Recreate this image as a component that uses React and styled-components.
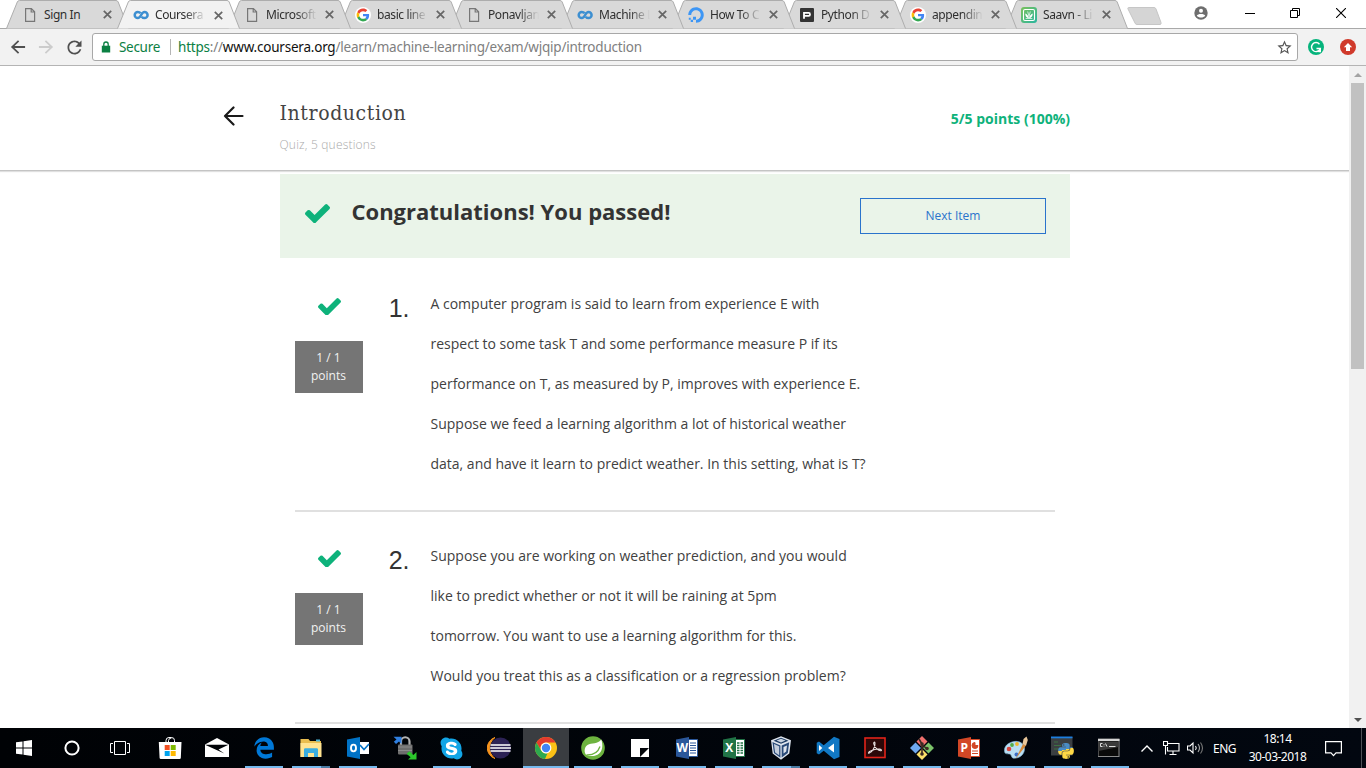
import React from "react";
import styled, { createGlobalStyle, css } from "styled-components";
import { FaEdgeLegacy, FaSkype, FaPython, FaDigitalOcean } from "react-icons/fa";

const GlobalStyle = createGlobalStyle`
  *, *::before, *::after { box-sizing: border-box; }
  body { margin: 0; background: #fff; overflow: hidden; font-family: "Open Sans", sans-serif; }
  svg { display: block; flex: none; }
`;

const uiFont = css`font-family: "Noto Sans", "Open Sans", sans-serif;`;

const Desktop = styled.div`
  width: 1366px;
  height: 768px;
  display: flex;
  flex-direction: column;
  overflow: hidden;
`;

/* ---------- tab strip ---------- */

const TabStrip = styled.div`
  height: 28px;
  display: flex;
  padding-left: 6px;
  background: #fff;
`;

const TabShell = styled.div`
  position: relative;
  z-index: ${(p) => p.$z};
  width: 123px;
  height: ${(p) => (p.$active ? 29 : 28)}px;
  margin-right: -12px;
  padding: 1px 0 0 16px;
  flex: none;
  display: flex;
  align-items: center;
`;

const TabShape = styled.svg`
  position: absolute;
  inset: 0;
  z-index: -1;
`;

const Favicon = styled.span`
  width: 16px;
  height: 16px;
  margin-right: 6px;
  flex: none;
  display: flex;
  align-items: center;
  justify-content: center;
`;

const TabTitle = styled.span`
  ${uiFont}
  width: 54px;
  margin-right: 5px;
  flex: none;
  white-space: nowrap;
  font-size: 12px;
  line-height: 16px;
  letter-spacing: -0.4px;
  color: #2f2f2f;
  ${(p) => p.$fade && css`mask-image: linear-gradient(90deg, #000 30px, transparent 51px);`}
`;

const NewTab = styled.svg`
  margin: 7px 0 0 11px;
`;

const WindowControls = styled.div`
  margin-left: auto;
  height: 26px;
  display: flex;
  align-items: center;
`;

const ControlCell = styled.span`
  width: ${(p) => p.$w}px;
  display: flex;
  justify-content: center;
`;

/* ---------- toolbar ---------- */

const Toolbar = styled.div`
  height: 38px;
  display: flex;
  align-items: center;
  padding-left: 8px;
  background: #f2f2f2;
  border-top: 1px solid #a9a9a9;
  border-bottom: 1px solid #b4b4b4;
`;

const NavButton = styled.span`
  width: 28px;
  display: flex;
`;

const AddressBar = styled.div`
  ${uiFont}
  width: 1206px;
  height: 28px;
  margin-right: 10px;
  padding: 0 4px 0 8px;
  display: flex;
  align-items: center;
  background: #fff;
  border: 1px solid #a8a8a8;
  border-radius: 3px;
  font-size: 13.5px;
  line-height: 20px;
  white-space: nowrap;
`;

const Secure = styled.span`
  width: 51px;
  margin-left: 8px;
  letter-spacing: -0.3px;
  color: #0b8043;
`;

const Separator = styled.span`
  width: 1px;
  height: 16px;
  margin-right: 7px;
  background: #b5b5b5;
`;

const Url = styled.span`
  flex: 1;
  color: #808080;
  letter-spacing: -0.21px;
`;

const Scheme = styled.span`color: #0b8043;`;
const Host = styled.span`color: #111;`;

const Extension = styled.span`
  width: 32px;
  display: flex;
`;

/* ---------- page ---------- */

const Viewport = styled.div`
  height: 662px;
  display: flex;
  background: #fff;
`;

const Page = styled.main`
  width: 1349px;
  height: 662px;
  overflow: hidden;
`;

const Header = styled.header`
  height: 105px;
  padding: 0 279px 0 223px;
  display: flex;
  border-bottom: 1px solid #c4c4c4;
  box-shadow: 0 1px 1px rgba(0, 0, 0, 0.12);
`;

const BackLink = styled.span`
  width: 56.5px;
  padding-top: 40px;
`;

const Heading = styled.div`
  flex: 1;
  padding-top: 32px;
`;

const Title = styled.h1`
  margin: 0;
  font: 400 21px/30px "DejaVu Serif Condensed", "DejaVu Serif", serif;
  font-stretch: condensed;
  letter-spacing: 0.6px;
  color: #444;
`;

const Subtitle = styled.div`
  margin-top: 8px;
  font-size: 12px;
  line-height: 18px;
  font-weight: 300;
  letter-spacing: 0.2px;
  color: #aaa;
`;

const Score = styled.div`
  padding-top: 43px;
  font-size: 14px;
  line-height: 20px;
  font-weight: 700;
  color: #0eb27b;
  white-space: nowrap;
`;

const Content = styled.div`
  width: 790px;
  margin: 3px 0 0 280px;
`;

const Banner = styled.section`
  height: 84px;
  margin-bottom: 2px;
  padding: 24px 24px 0 25px;
  display: flex;
  align-items: flex-start;
  background: #eaf4e9;
`;

const BannerMark = styled.span`
  padding-top: 6px;
`;

const BannerText = styled.h2`
  flex: 1;
  margin: -3px 0 0 21.5px;
  font-size: 22px;
  line-height: 32px;
  font-weight: 700;
  color: #333;
`;

const NextButton = styled.button`
  width: 186px;
  height: 36px;
  padding: 0 0 2px;
  border: 1px solid #2a73cc;
  background: transparent;
  font-family: "Open Sans", sans-serif;
  font-size: 12px;
  color: #2a73cc;
`;

const Question = styled.section`
  margin: 0 15px;
  padding: 24px 0 26px;
  display: flex;
  border-bottom: 2px solid #e0e0e0;
`;

const Status = styled.div`
  width: 68px;
  padding-top: 13.5px;
  display: flex;
  flex-direction: column;
  align-items: center;
  gap: 25.5px;
`;

const Points = styled.div`
  width: 68px;
  height: 52px;
  padding: 8px 1px 0 0;
  background: #757575;
  color: #f2f2f2;
  font-size: 12px;
  line-height: 18px;
  text-align: center;
`;

const Number = styled.div`
  width: 46.5px;
  margin-right: 21px;
  padding-top: 9px;
  text-align: right;
  font: 400 25px/30px "Liberation Sans", Arial, sans-serif;
  color: #333;
`;

const Prompt = styled.p`
  margin: 0;
  font-size: 14px;
  line-height: 40px;
  color: #414141;
  white-space: nowrap;
`;

const Scrollbar = styled.div`
  width: 17px;
  padding: 7px 0 6px;
  display: flex;
  flex-direction: column;
  align-items: center;
  background: #f1f1f1;
`;

const Thumb = styled.div`
  width: 13px;
  height: 286px;
  margin: 6px 0 auto;
  background: #c1c1c1;
`;

/* ---------- taskbar ---------- */

const Taskbar = styled.footer`
  ${uiFont}
  height: 40px;
  display: flex;
  background: linear-gradient(90deg, #000205, #020710);
  color: #fff;
`;

const SystemCell = styled.span`
  width: 48px;
  flex: none;
  display: flex;
  align-items: center;
  justify-content: center;
`;

const Apps = styled.div`
  margin-left: 3px;
  flex: none;
  display: flex;
`;

const AppCell = styled.span`
  width: 47px;
  height: 40px;
  padding-right: 1px;
  display: flex;
  flex-direction: column;
  align-items: center;
  background: ${(p) => (p.$focused ? "linear-gradient(90deg, #3a3d41 46px, transparent 46px)" : "none")};
`;

const AppIcon = styled.span`
  height: 38px;
  margin-right: 1px;
  padding-top: 2px;
  display: flex;
  align-items: center;
`;

const Indicator = styled.span`
  width: ${(p) => (p.$focused ? 46 : 38)}px;
  height: 2px;
  background: ${(p) => (p.$stacked ? "linear-gradient(90deg, #76b9ed 29px, #4a7ba3 29px)" : p.$running ? "#76b9ed" : "transparent")};
`;

const SkypeBadge = styled.span`
  display: flex;
  border-radius: 50%;
  background: radial-gradient(circle, #fff 8px, transparent 8.5px);
`;

const Tray = styled.div`
  margin-left: 7px;
  flex: none;
  display: flex;
  align-items: center;
  font-size: 12px;
`;

const Language = styled.span`
  width: 34px;
  margin-left: 12px;
  letter-spacing: -0.5px;
`;

const Clock = styled.div`
  width: 61px;
  display: flex;
  flex-direction: column;
  align-items: center;
  line-height: 18px;
  letter-spacing: -0.5px;
  white-space: nowrap;
`;

const TrayIcon = styled.span`
  width: ${(p) => p.$w}px;
  display: flex;
  justify-content: center;
`;

const ShowDesktop = styled.span`
  width: 5px;
  margin-left: auto;
  border-left: 1px solid #4d5157;
`;

/* ---------- drawings ---------- */

const FileIcon = () => (
  <svg width="16" height="16" viewBox="0 0 16 16" fill="none" stroke="#777" strokeWidth="1.2">
    <path d="M3.6 1.6h5.8l3.2 3.2v9.6h-9zM9.2 1.8v3.2h3.2" />
  </svg>
);

const CourseraIcon = () => (
  <svg width="16" height="16" viewBox="0 0 16 16" fill="none" stroke="#3d8fd1" strokeWidth="2.500">
    <path d="M7.600 6.100C6.800 5.200 5.900 4.900 4.800 4.900a3.100 3.100 0 0 0 0 6.200C8.300 11.100 8 4.900 11.500 4.900a3.100 3.100 0 0 1 0 6.200C10.100 11.100 9.300 10.400 8.800 9.700" />
  </svg>
);

const GoogleIcon = () => (
  <svg width="16" height="16" viewBox="0 0 16 16">
    <circle cx="8" cy="8" r="8" fill="#fff" />
    <g transform="translate(1.600 1.600) scale(.2667)">
      <path fill="#EA4335" d="M24 9.500c3.540 0 6.710 1.220 9.210 3.600l6.850-6.850C35.900 2.380 30.470 0 24 0 14.620 0 6.510 5.380 2.560 13.220l7.980 6.190C12.430 13.720 17.740 9.500 24 9.500z" />
      <path fill="#4285F4" d="M46.980 24.550c0-1.570-.15-3.090-.38-4.550H24v9.020h12.940c-.58 2.960-2.260 5.480-4.780 7.180l7.730 6c4.510-4.180 7.090-10.360 7.090-17.650z" />
      <path fill="#FBBC05" d="M10.530 28.590c-.48-1.450-.76-2.990-.76-4.590s.27-3.140.76-4.590l-7.980-6.190C.92 16.460 0 20.120 0 24c0 3.880.92 7.540 2.560 10.780l7.970-6.190z" />
      <path fill="#34A853" d="M24 48c6.480 0 11.930-2.130 15.890-5.810l-7.730-6c-2.150 1.450-4.920 2.300-8.160 2.300-6.260 0-11.570-4.220-13.470-9.910l-7.980 6.190C6.510 42.620 14.620 48 24 48z" />
    </g>
  </svg>
);

const ProgIcon = () => (
  <svg width="14" height="14" viewBox="0 0 14 14">
    <rect width="14" height="14" rx="1" fill="#343434" />
    <path d="M4 10.800V4.900h4.800q1.200 0 1.200 1.500t-1.200 1.500H4.500" fill="none" stroke="#fff" strokeWidth="1.800" />
  </svg>
);

const SaavnIcon = () => (
  <svg width="16" height="16" viewBox="0 0 16 16">
    <defs>
      <linearGradient id="saavn" x1="0" y1="0" x2="1" y2="1">
        <stop stopColor="#7ac15a" /><stop offset="1" stopColor="#2ab5a0" />
      </linearGradient>
    </defs>
    <rect width="16" height="16" rx="3" fill="url(#saavn)" />
    <rect x="2.500" y="2.500" width="11" height="11" rx="1.500" fill="none" stroke="#fff" strokeWidth="1.100" />
    <path d="M8 11.200C5.500 11.200 4.300 9 4.200 6.500 6.500 7.500 7.500 9 8 11.200c.5-2.200 1.500-3.700 3.800-4.700C11.700 9 10.500 11.200 8 11.200z" fill="#fff" />
    <path d="M8 9.500 6.700 4.500M8 9.500 9.300 4.500M4.700 11.500h6.600" stroke="#fff" strokeWidth=".7" />
  </svg>
);

const CloseX = () => (
  <svg width="9" height="9" viewBox="0 0 9 9" stroke="#666" strokeWidth="1.700">
    <path d="M.8.8l7.400 7.400M8.200.8.800 8.200" />
  </svg>
);

const Material = ({ size, color, d }) => (
  <svg width={size} height={size} viewBox="0 0 24 24" fill={color}><path d={d} /></svg>
);

const BACK = "M20.500 10.900H7.830l5.590-5.490L12 4l-8.500 8 8.500 8 1.410-1.410L7.830 13.100H20.500v-2.200z";
const FORWARD = "M12 4l-1.410 1.410L16.170 10.900H3.500v2.200h12.670l-5.580 5.490L12 20l8.500-8z";
const RELOAD = "M17.650 6.350C16.200 4.900 14.210 4 12 4c-4.420 0-7.990 3.580-7.990 8s3.570 8 7.990 8c3.730 0 6.840-2.550 7.730-6h-2.080c-.82 2.330-3.040 4-5.650 4-3.310 0-6-2.690-6-6s2.690-6 6-6c1.660 0 3.140.69 4.220 1.780L13 11h7V4l-2.350 2.350z";
const STAR = "M22 9.240l-7.190-.62L12 2 9.190 8.630 2 9.240l5.460 4.730L5.820 21 12 17.270 18.180 21l-1.630-7.030L22 9.240zM12 15.400l-3.760 2.270 1-4.280-3.320-2.880 4.380-.38L12 6.100l1.710 4.040 4.380.38-3.320 2.880 1 4.280L12 15.400z";

const Check = ({ width }) => (
  <svg width={width} height={width * 0.77} viewBox="121 334 1550 1188" fill="#0eb27b">
    <path d="M1671 566q0 40-28 68l-724 724-136 136q-28 28-68 28t-68-28l-136-136-362-362q-28-28-28-68t28-68l136-136q28-28 68-28t68 28l294 295 656-657q28-28 68-28t68 28l136 136q28 28 28 68z" />
  </svg>
);

const Icon = ({ children }) => (
  <svg width="24" height="24" viewBox="0 0 24 24">{children}</svg>
);

const Office = ({ dark, mid, letter, children }) => (
  <Icon>
    <path d="M13 3.500h9.500v17H13z" fill="#fff" stroke={mid} strokeWidth="1" />
    {children}
    <path d="M1 3.500 14 1v22L1 20.500z" fill={dark} />
    <text x="7.300" y="16.300" textAnchor="middle" fontFamily="Open Sans, sans-serif" fontWeight="700" fontSize="12" fill="#fff">{letter}</text>
  </Icon>
);

const Store = () => (
  <Icon>
    <path d="M8 7V4.500a3 3 0 0 1 3-3h2.500a3 3 0 0 1 3 3V7M10.500 7V4.500a3 3 0 0 1 3-2.500" fill="none" stroke="#fff" strokeWidth="1" />
    <path d="M.8 6h22.700L22.800 22a1.200 1.200 0 0 1-1.200 1H2.800a1.200 1.200 0 0 1-1.200-1z" fill="#fff" />
    <path d="M6.700 9h5v5h-5z" fill="#f25022" /><path d="M12.700 9h5v5h-5z" fill="#7fba00" />
    <path d="M6.700 15h5v5h-5z" fill="#00a4ef" /><path d="M12.700 15h5v5h-5z" fill="#ffb900" />
  </Icon>
);

const Mail = () => (
  <Icon>
    <path d="M0 8.500 12 2l12 6.500V21H0z" fill="#fff" />
    <path d="M0 8.700h23.500L13.500 13.600l5.800 3.800z" fill="#000307" />
  </Icon>
);

const Explorer = () => (
  <Icon>
    <path d="M1.500 3h8l1.500 2h11v16H1.500z" fill="#e9bd4f" />
    <path d="M1.500 7h21v14h-21z" fill="#ffe391" />
    <path d="M17 3.500h4v2h-4z" fill="#4cb6d9" />
    <path d="M5 21v-7.500a1.300 1.300 0 0 1 1.300-1.300h11.400A1.300 1.300 0 0 1 19 13.500V21h-4v-4H9v4z" fill="#3aade0" />
  </Icon>
);

const Outlook = () => (
  <Icon>
    <path d="M12 6h11v12H12z" fill="#fff" />
    <path d="m14 9 4 4.500L23 8" fill="none" stroke="#0072c6" strokeWidth="1.600" />
    <path d="M1 3.500 14 1v22L1 20.500z" fill="#0072c6" />
    <ellipse cx="7.500" cy="12" rx="2.500" ry="3.400" fill="none" stroke="#fff" strokeWidth="1.900" />
  </Icon>
);

const WinScp = () => (
  <Icon>
    <path d="M8 11V5.500a4 4 0 0 1 8.500 0V11" fill="none" stroke="#b4b4b4" strokeWidth="2.200" />
    <rect x="5" y="8.500" width="14.500" height="10" rx="1" fill="#6e6e6e" />
    <path d="M5 11h14M5 14.500h14" stroke="#8c8c8c" />
    <path d="M.5.800H8.500V8L6 5.500 3 8 .8 5.800 3.500 3.500z" fill="#2f7fe0" />
    <path d="M23.500 23.500H15l2.600-2.200-4-3.500 2.800-2.500 4 3.600 3.100-2.900z" fill="#2cc72c" />
  </Icon>
);

const Eclipse = () => (
  <Icon>
    <path d="M8 1.500A11 11 0 0 0 8 22.500 13 13 0 0 1 8 1.500z" fill="#f7941e" stroke="#f7941e" />
    <circle cx="13.500" cy="12" r="10.500" fill="#2c2255" />
    <path d="M3.500 9h20M3.200 12h20.800M3.500 15h20" stroke="#fff" strokeWidth="1.500" />
  </Icon>
);

const Chrome = () => (
  <Icon>
    <circle cx="12" cy="12" r="11" fill="#fbc116" />
    <path d="M2.470 6.500A11 11 0 0 1 21.530 6.500H12a5.500 5.500 0 0 0-4.760 8.250z" fill="#e33b2e" />
    <path d="M2.470 6.500 7.240 14.750A5.500 5.500 0 0 0 13.500 17.300L11 22.960A11 11 0 0 1 2.470 6.500z" fill="#2da94f" />
    <circle cx="12" cy="12" r="5.400" fill="#fff" /><circle cx="12" cy="12" r="4.200" fill="#4285f4" />
  </Icon>
);

const Spring = () => (
  <Icon>
    <circle cx="12" cy="12" r="11.800" fill="#6db33f" />
    <path d="M20.300 3.500c1.900 6 1.500 12.500-3.800 15.300-4 2-8 1.200-11 .3C3 17 2.800 11.500 6.500 9c4-2.500 10.500-.5 13.800-5.500z" fill="#fff" />
    <path d="M5.500 18.800c6 .3 11.500-2.300 13.500-8.300" fill="none" stroke="#6db33f" strokeWidth="1.300" />
  </Icon>
);

const StickyNotes = () => (
  <Icon>
    <path d="M3 3h18v18H3z" fill="#fff" />
    <path d="M12 12h9l-9 9z" fill="#05080c" />
  </Icon>
);

const VBox = () => (
  <Icon>
    <path d="M12 .3 22 4.200 20.300 17.500 12 23.700 3.700 17.500 2 4.200z" fill="#dfe5ee" />
    <path d="M12 1.800 19.500 4.700 12 7.800 4.500 4.700z" fill="#1d3b63" />
    <path d="m12 2.800 4.500 1.800L12 6.400 7.500 4.600z" fill="#c9d3e0" />
    <path d="M3.800 6.300 11.300 9.500v12L5.200 17z" fill="#c3cddb" /><path d="M20.200 6.300 12.700 9.500v12L18.800 17z" fill="#2a4a78" />
    <path d="M4.200 7 10.800 10v10.500L5.500 16.700z" fill="none" stroke="#2a4a78" strokeWidth="1.200" />
    <path d="M14.500 17.500V11l3.500-1.500-.8 6z" fill="#dfe5ee" />
  </Icon>
);

const VsCode = () => (
  <Icon>
    <path d="M18 .700 23.500 3v18L18 23.300 7.700 14.800 3 18.500.7 17.200V6.800L3 5.500l4.700 3.700z" fill="#1178c4" />
    <path d="M18 7.500 12 12l6 4.500zM3 9v6l3.300-3z" fill="#fff" />
  </Icon>
);

const Acrobat = () => (
  <Icon>
    <rect x="2" y="2" width="20" height="19.500" fill="#2b0808" stroke="#e2231a" strokeWidth="1.600" />
    <path d="M6 17.300c3-1 6.500-6.500 6-10.300-.2-1.400-1.600-1-1.300.5.6 3.500 4 7 6.800 7.300 1.500 0 1.300-1.500-.7-1.700-3-.3-6 .4-9.300 2-2.200 1-2.500 2.400-1.500 2.200z" fill="none" stroke="#e8e0e0" strokeWidth="1.100" />
  </Icon>
);

const Git = () => (
  <Icon>
    <path d="m12 0 5.500 5.500L12 11 6.500 5.500z" fill="#f0706e" />
    <path d="m5.500 6.500 5.500 5.500-5.500 5.500L0 12z" fill="#6ea8f0" />
    <path d="m18.500 6.500 5.500 5.500-5.500 5.500L13 12z" fill="#7cc46a" />
    <path d="m12 13 5.500 5.500L12 24l-5.500-5.500z" fill="#fbe06a" />
    <path d="M9 3l3 5v9.500M12 8.500l4.500 4" fill="none" stroke="#3c2a23" strokeWidth="1.600" />
    <circle cx="12" cy="18" r="1.800" fill="#3c2a23" /><circle cx="17" cy="12.500" r="1.800" fill="#3c2a23" /><circle cx="12" cy="8" r="1.800" fill="#3c2a23" />
  </Icon>
);

const Paint = () => (
  <Icon>
    <path d="M10 5.500C16 4.500 21 8.500 20.500 13.500c-.5 6-6 9-11 8.700C7 22 8 18.500 5.500 18c-2-.4-4.500.5-5-2.500C-.3 10.500 4 6.500 10 5.500z" fill="#b9def3" stroke="#7fb4d4" strokeWidth=".6" />
    <circle cx="5" cy="13" r="2.300" fill="#d8453e" /><circle cx="8" cy="9" r="1.900" fill="#52ad48" /><circle cx="13" cy="8" r="1.900" fill="#f0b52d" />
    <circle cx="12.500" cy="18.500" r="2" fill="#3b6fc8" />
    <path d="m11.500 23 7.500-15 3 1.500z" fill="#d88b3a" /><path d="M18.500 8 19.500 3l3-2.500 1.300 3.500L22 9.700z" fill="#e8c69a" />
  </Icon>
);

const PythonApp = () => (
  <Icon>
    <path d="M0 1h21.500v18.500H0z" fill="#3b3f42" /><path d="M0 .500h21.500v1.800H0z" fill="#1d7fe0" />
    <path d="M3 6h4M3 9.500h7M3 13h5" stroke="#3c7043" strokeWidth="1.200" />
    <defs>
      <linearGradient id="py" x1="0" y1="0" x2=".25" y2="1">
        <stop offset=".5" stopColor="#4a8cc4" /><stop offset=".5" stopColor="#ffd845" />
      </linearGradient>
    </defs>
    <FaPython x="6" y="6" size="18" fill="url(#py)" />
  </Icon>
);

const Terminal = () => (
  <svg width="24" height="24" viewBox="1.500 0 24 24">
    <rect x="1.500" y="3" width="21" height="17.500" fill="#0a0a0a" stroke="#8d8d8d" />
    <path d="M1 3h22v2H1z" fill="#d5d5d5" />
    <path d="M2 5.500h20V11L2 15z" fill="#3a3a3a" />
    <path d="M6 7.500H4v3h2M7.500 8v.7M7.500 9.700v.8M9 7.500l1.500 3.200M12.500 10.500H19" fill="none" stroke="#eee" strokeWidth=".9" />
  </svg>
);

const ICONS = {
  file: <FileIcon />, coursera: <CourseraIcon />, google: <GoogleIcon />, prog: <ProgIcon />, saavn: <SaavnIcon />,
  ocean: <FaDigitalOcean size={16} color="#3d96f5" />,
};

const TABS = [
  ["file", "Sign In"], ["coursera", "Coursera"], ["file", "Microsoft"], ["google", "basic line"], ["file", "Ponavljan"],
  ["coursera", "Machine L"], ["ocean", "How To C"], ["prog", "Python D"], ["google", "appendin"], ["saavn", "Saavn - Li"],
];

const Tab = ({ icon, title, active, z }) => (
  <TabShell $active={active} $z={z}>
    <TabShape width="123" height="29" viewBox="0 0 123 29">
      <path d="M.5 28.500 11.300 2Q12 .500 13.500.500H110Q111.500.500 112.200 2L122.500 28.500" fill={active ? "#f2f2f2" : "#d9d9d9"} stroke="#adadad" />
    </TabShape>
    <Favicon>{ICONS[icon]}</Favicon>
    <TabTitle $fade={title.length > 7}>{title}</TabTitle>
    <CloseX />
  </TabShell>
);

const APPS = [
  [<Store />, ""], [<Mail />, ""], [<FaEdgeLegacy size={22} color="#0078d7" />, "running"], [<Explorer />, "stacked"], [<Outlook />, "running"],
  [<WinScp />, ""], [<SkypeBadge><FaSkype size={25} color="#12a5e6" /></SkypeBadge>, "running"], [<Eclipse />, ""], [<Chrome />, "focused"], [<Spring />, "running"],
  [<StickyNotes />, "running"],
  [<Office dark="#2b579a" mid="#2b579a" letter="W"><path d="M15 7h6M15 9.500h6M15 12h6M15 14.500h6M15 17h6" stroke="#2b579a" /></Office>, "running"],
  [<Office dark="#217346" mid="#217346" letter="X"><path d="M15 7h6M15 9.500h6M15 12h6M15 14.500h6M15 17h6" stroke="#217346" strokeWidth="1.300" strokeDasharray="2.500 1" /></Office>, "running"],
  [<VBox />, "stacked"], [<VsCode />, "running"], [<Acrobat />, "running"], [<Git />, "running"],
  [<Office dark="#d24726" mid="#d24726" letter="P"><path d="M18 6.500a3 3 0 1 0 3 3h-3zM15 15h6M15 17.500h6" fill="#d24726" stroke="#d24726" /></Office>, "running"],
  [<Paint />, "running"], [<PythonApp />, "running"], [<Terminal />, "running"],
];

const QUESTIONS = [
  [
    "A computer program is said to learn from experience E with",
    "respect to some task T and some performance measure P if its",
    "performance on T, as measured by P, improves with experience E.",
    "Suppose we feed a learning algorithm a lot of historical weather",
    "data, and have it learn to predict weather. In this setting, what is T?",
  ],
  [
    "Suppose you are working on weather prediction, and you would",
    "like to predict whether or not it will be raining at 5pm",
    "tomorrow. You want to use a learning algorithm for this.",
    "Would you treat this as a classification or a regression problem?",
  ],
];

export default function App() {
  return (
    <Desktop>
      <GlobalStyle />
      <TabStrip>
        {TABS.map(([icon, title], i) => (
          <Tab key={title} icon={icon} title={title} active={i === 1} z={i === 1 ? 20 : 12 - i} />
        ))}
        <NewTab width="35" height="18" viewBox="0 0 35 18">
          <path d="M1.500.500H27Q28.500.500 29 2L34 15.500Q34.500 17.500 33 17.500H10Q8.500 17.500 8 16L1 2Q.5.500 1.500.500z" fill="#d5d5d5" stroke="#c6c6c6" />
        </NewTab>
        <WindowControls>
          <ControlCell $w={50}>
            <svg width="14" height="14" viewBox="0 0 14 14">
              <circle cx="7" cy="7" r="6.700" fill="#6e6e6e" /><circle cx="7" cy="4.700" r="2" fill="#fff" />
              <path d="M2.800 9.800C3.500 7.500 10.500 7.500 11.200 9.800 9.500 12.200 4.500 12.200 2.800 9.800z" fill="#fff" />
            </svg>
          </ControlCell>
          <ControlCell $w={48}><svg width="10" height="10"><path d="M0 5.500h10" stroke="#000" /></svg></ControlCell>
          <ControlCell $w={42}>
            <svg width="10" height="10" fill="none" stroke="#000"><path d="M.5 2.500h7v7h-7zM2.500 2.500v-2h7v7h-2" /></svg>
          </ControlCell>
          <ControlCell $w={50}><svg width="10" height="10" stroke="#000" strokeWidth="1.100"><path d="M0 0l10 10M10 0 0 10" /></svg></ControlCell>
        </WindowControls>
      </TabStrip>

      <Toolbar>
        <NavButton><Material size={20} color="#505050" d={BACK} /></NavButton>
        <NavButton><Material size={20} color="#ccc" d={FORWARD} /></NavButton>
        <NavButton><Material size={21} color="#505050" d={RELOAD} /></NavButton>
        <AddressBar>
          <svg width="10" height="12" viewBox="0 0 10 12">
            <path d="M2.800 5V3.200a2.200 2.200 0 0 1 4.400 0V5" fill="none" stroke="#0b8043" strokeWidth="1.300" />
            <path d="M.8 4.700h8.400v6.800H.8z" fill="#0b8043" />
          </svg>
          <Secure>Secure</Secure>
          <Separator />
          <Url><Scheme>https</Scheme>://<Host>www.coursera.org</Host>/learn/machine-learning/exam/wjqip/introduction</Url>
          <Material size={17} color="#555" d={STAR} />
        </AddressBar>
        <Extension>
          <svg width="16" height="16" viewBox="0 0 16 16">
            <circle cx="8" cy="8" r="8" fill="#06b47c" />
            <path d="M11.500 5.200A4.500 4.500 0 1 0 12.300 9.500H8.500M10.500 12.500h1.800V9.500" fill="none" stroke="#fff" strokeWidth="1.400" />
          </svg>
        </Extension>
        <svg width="16" height="16" viewBox="0 0 16 16">
          <circle cx="8" cy="8" r="8" fill="#d03a2b" /><path d="M8 4l4.200 4.300H10V12H6V8.300H3.800z" fill="#fff" />
        </svg>
      </Toolbar>

      <Viewport>
        <Page>
          <Header>
            <BackLink>
              <svg width="21" height="20" viewBox="0 0 21 20" fill="none" stroke="#1a1a1a" strokeWidth="2.200" strokeLinecap="round" strokeLinejoin="round">
                <path d="M10.500 1.500 2 10l8.500 8.500M2 10h17.500" />
              </svg>
            </BackLink>
            <Heading>
              <Title>Introduction</Title>
              <Subtitle>Quiz, 5 questions</Subtitle>
            </Heading>
            <Score>5/5 points (100%)</Score>
          </Header>
          <Content>
            <Banner>
              <BannerMark><Check width={25} /></BannerMark>
              <BannerText>Congratulations! You passed!</BannerText>
              <NextButton>Next Item</NextButton>
            </Banner>
            {QUESTIONS.map((lines, i) => (
              <Question key={i}>
                <Status>
                  <Check width={23} />
                  <Points>1 / 1<br />points</Points>
                </Status>
                <Number>{i + 1}.</Number>
                <Prompt>
                  {lines.map((line) => <React.Fragment key={line}>{line}<br /></React.Fragment>)}
                </Prompt>
              </Question>
            ))}
          </Content>
        </Page>
        <Scrollbar>
          <svg width="8" height="4"><path d="M0 4 4 0l4 4z" fill="#a3a3a3" /></svg>
          <Thumb />
          <svg width="8" height="4"><path d="M0 0h8L4 4z" fill="#505050" /></svg>
        </Scrollbar>
      </Viewport>

      <Taskbar>
        <SystemCell>
          <svg width="16" height="16" viewBox="0 0 16 16" fill="#fff">
            <path d="M0 2.300 6.500 1.400V7.500H0zM7.500 1.200 16 0v7.500H7.500zM0 8.500h6.500v6.100L0 13.700zM7.500 8.500H16V16L7.500 14.800z" />
          </svg>
        </SystemCell>
        <SystemCell><svg width="16" height="16"><circle cx="8" cy="8" r="6.600" fill="none" stroke="#fff" strokeWidth="2" /></svg></SystemCell>
        <SystemCell>
          <svg width="20" height="14" fill="none" stroke="#fff"><path d="M4.500.500h11v13h-11zM3 2.500H.5v9H3M17 2.500h2.500v9H17" /></svg>
        </SystemCell>
        <Apps>
          {APPS.map(([icon, state], i) => (
            <AppCell key={i} $focused={state === "focused"}>
              <AppIcon>{icon}</AppIcon>
              <Indicator $running={state !== ""} $stacked={state === "stacked"} $focused={state === "focused"} />
            </AppCell>
          ))}
        </Apps>
        <Tray>
          <TrayIcon $w={12}><svg width="12" height="7" fill="none" stroke="#fff" strokeWidth="1.400"><path d="m.5 6.500 5.500-5.500 5.500 5.500" /></svg></TrayIcon>
          <TrayIcon $w={36}>
            <svg width="17" height="15" fill="none" stroke="#fff" strokeWidth="1.100"><path d="M5 2.500h11v7.500H4.500V6M.500.500h4v4h-4zM2.500 4.500v9M10 10v3.500M6.500 13.500h7" /></svg>
          </TrayIcon>
          <TrayIcon $w={12}>
            <svg width="17" height="14" fill="none" strokeWidth="1.100"><path d="M.5 5h2.500l3-3v10l-3-3H.5z" stroke="#fff" /><path d="M8.500 5q1.500 2 0 4" stroke="#fff" /><path d="M11 3q3 4 0 8" stroke="#aaa" /><path d="M13.500 1.500q4 5.500 0 11" stroke="#777" /></svg>
          </TrayIcon>
          <Language>ENG</Language>
          <Clock><span>18:14</span><span>30-03-2018</span></Clock>
          <TrayIcon $w={50}>
            <svg width="17" height="17" fill="none" stroke="#fff" strokeWidth="1.200"><path d="M.6 1.600h15.800v11.300H11L8.500 15.600 6 12.900H.6z" /></svg>
          </TrayIcon>
        </Tray>
        <ShowDesktop />
      </Taskbar>
    </Desktop>
  );
}
